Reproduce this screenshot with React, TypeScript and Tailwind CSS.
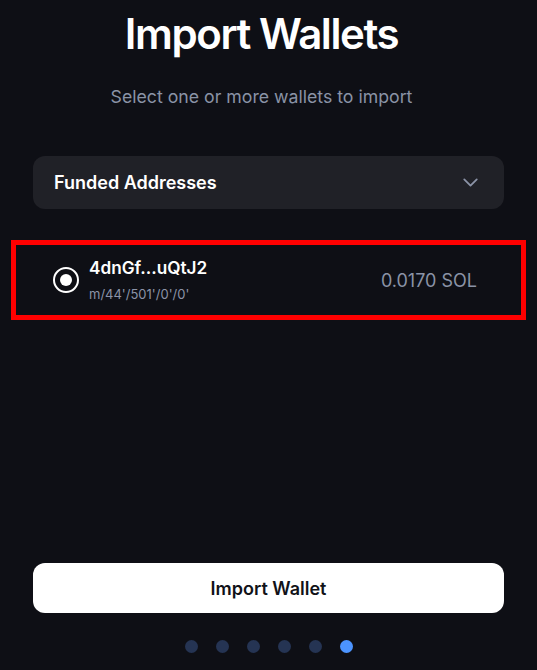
import { ChevronDown } from "lucide-react";

const dots = [false, false, false, false, false, true];

export default function App() {
  return (
    <div
      className="h-[670px] w-full bg-[#0e0f15] flex flex-col overflow-hidden"
      style={{ fontFamily: "Inter, 'Noto Sans', sans-serif" }}
    >
      {/* header */}
      <div className="pt-[9px] pr-[14px] flex flex-col items-center">
        <h1 className="text-[42px] leading-[50px] font-semibold text-white tracking-[-1.4px]">
          Import Wallets
        </h1>
        <p className="mt-[26px] text-[17.7px] leading-[24px] text-[#8a93a6]">
          Select one or more wallets to import
        </p>
      </div>

      {/* dropdown */}
      <div className="px-[33px] mt-[47px]">
        <button className="w-full h-[53px] rounded-[12px] bg-[#202127] flex items-center justify-between pl-[21px] pr-[21px]">
          <span className="text-[18px] font-semibold text-white">Funded Addresses</span>
          <ChevronDown className="w-[25px] h-[25px] text-[#8b93a7]" strokeWidth={1.7} />
        </button>
      </div>

      {/* wallet list */}
      <div className="mx-[11px] mt-[31px] border-[5px] border-[#ff0000] h-[80px] flex items-center pl-[37px] pr-[44px]">
        <div className="w-[26px] h-[26px] rounded-full border-[2.5px] border-white flex items-center justify-center shrink-0">
          <div className="w-[12px] h-[12px] rounded-full bg-white" />
        </div>
        <div className="ml-[10px] flex flex-col">
          <span className="text-[17.2px] leading-[22px] font-semibold text-white">4dnGf...uQtJ2</span>
          <span className="mt-[6px] text-[13px] leading-[18px] text-[#8b93a7]">m/44'/501'/0'/0'</span>
        </div>
        <span className="ml-auto text-[18px] text-[#8a93a6]">0.0170 SOL</span>
      </div>

      {/* footer */}
      <div className="mt-auto px-[33px]">
        <button className="w-full h-[50px] rounded-[12px] bg-white flex items-center justify-center">
          <span className="text-[18px] font-semibold text-[#111218]">Import Wallet</span>
        </button>
      </div>
      <div className="flex justify-center gap-[18px] mt-[27px] mb-[17px]">
        {dots.map((active, i) =>
          active ? (
            <div key={i} className="w-[13px] h-[13px] rounded-full bg-[#4c94ff]" />
          ) : (
            <div key={i} className="w-[13px] h-[13px] rounded-full bg-[#253453]" />
          )
        )}
      </div>
    </div>
  );
}
